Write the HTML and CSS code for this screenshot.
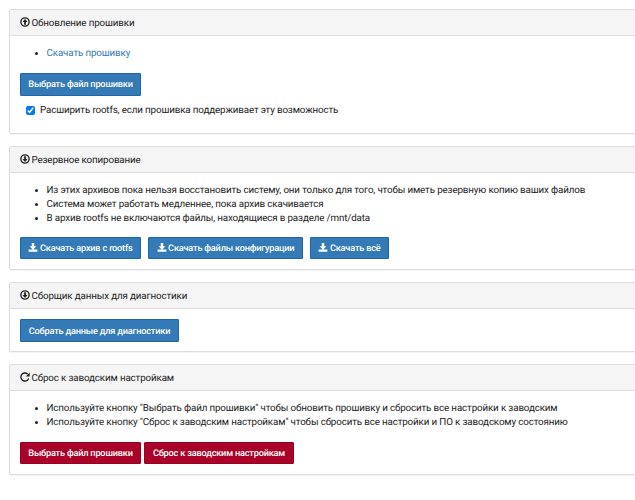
FILE: index.html
```html
<!DOCTYPE html>
<html lang="ru">
<head>
    <meta charset="UTF-8">
    <title>Система</title>
    <link rel="stylesheet" href="styles.css">
</head>
<body>
    <svg class="sprite">
        <symbol id="icon-up" viewBox="0 0 16 16">
            <circle cx="8" cy="8" r="6.6" fill="none" stroke="currentColor" stroke-width="2.2"/>
            <path d="M8 3.2 12 8H9.4v4.3H6.6V8H4z" fill="currentColor"/>
        </symbol>
        <symbol id="icon-down" viewBox="0 0 16 16">
            <circle cx="8" cy="8" r="6.6" fill="none" stroke="currentColor" stroke-width="2.2"/>
            <path d="M8 12.8 4 8h2.6V3.7h2.8V8H12z" fill="currentColor"/>
        </symbol>
        <symbol id="icon-repeat" viewBox="0 0 16 16">
            <path d="M13.8 10.3A6.4 6.4 0 1 1 12.2 3.4" fill="none" stroke="currentColor" stroke-width="2.2"/>
            <path d="M15.5 0.8V7H9.3z" fill="currentColor"/>
        </symbol>
        <symbol id="icon-save" viewBox="0 0 16 16">
            <path d="M6 0h4v5h3.4L8 10.6 2.6 5H6zM1 10.5h14V14H1z" fill="currentColor"/>
        </symbol>
    </svg>
    <main class="page">
        <section class="panel panel-update">
            <h3 class="panel-heading"><svg class="icon"><use href="#icon-up"/></svg>Обновление прошивки</h3>
            <div class="panel-body">
                <ul class="notes">
                    <li><a href="#">Скачать прошивку</a></li>
                </ul>
                <div class="buttons">
                    <button class="btn btn-primary btn-tall">Выбрать файл прошивки</button>
                </div>
                <label class="checkbox"><input type="checkbox" checked><span>Расширить rootfs, если прошивка поддерживает эту возможность</span></label>
            </div>
        </section>
        <section class="panel panel-backup">
            <h3 class="panel-heading"><svg class="icon"><use href="#icon-down"/></svg>Резервное копирование</h3>
            <div class="panel-body">
                <ul class="notes">
                    <li>Из этих архивов пока нельзя восстановить систему, они только для того, чтобы иметь резервную копию ваших файлов</li>
                    <li>Система может работать медленнее, пока архив скачивается</li>
                    <li>В архив rootfs не включаются файлы, находящиеся в разделе /mnt/data</li>
                </ul>
                <div class="buttons buttons-wide">
                    <button class="btn btn-primary"><svg class="icon"><use href="#icon-save"/></svg>Скачать архив с rootfs</button>
                    <button class="btn btn-primary btn-config"><svg class="icon"><use href="#icon-save"/></svg>Скачать файлы конфигурации</button>
                    <button class="btn btn-primary btn-all"><svg class="icon"><use href="#icon-save"/></svg>Скачать всё</button>
                </div>
            </div>
        </section>
        <section class="panel panel-diag">
            <h3 class="panel-heading"><svg class="icon"><use href="#icon-down"/></svg>Сборщик данных для диагностики</h3>
            <div class="panel-body">
                <div class="buttons">
                    <button class="btn btn-primary btn-collect">Собрать данные для диагностики</button>
                </div>
            </div>
        </section>
        <section class="panel panel-reset">
            <h3 class="panel-heading"><svg class="icon"><use href="#icon-repeat"/></svg>Сброс к заводским настройкам</h3>
            <div class="panel-body">
                <ul class="notes">
                    <li>Используйте кнопку "Выбрать файл прошивки" чтобы обновить прошивку и сбросить все настройки к заводским</li>
                    <li>Используйте кнопку "Сброс к заводским настройкам" чтобы сбросить все настройки и ПО к заводскому состоянию</li>
                </ul>
                <div class="buttons">
                    <button class="btn btn-danger">Выбрать файл прошивки</button>
                    <button class="btn btn-danger btn-factory">Сброс к заводским настройкам</button>
                </div>
            </div>
        </section>
    </main>
</body>
</html>
```
FILE: styles.css
```css
* { box-sizing: border-box; }
body { margin: 0; background: #fff; color: #222; font: 9.8px/13.75px Roboto, sans-serif; letter-spacing: -0.14px; text-rendering: geometricPrecision; overflow: hidden; }
.sprite { display: none; }
.page { width: 650px; padding: 9px 0 0 9px; }
.panel { margin-bottom: 12px; border: 1px solid #ddd; border-radius: 2px; background: #fff; box-shadow: 0 1px 1px rgba(0,0,0,0.05); }
.panel-update { height: 125px; }
.panel-backup { height: 124px; }
.panel-diag { height: 70px; }
.panel-reset { height: 111px; }
.panel-heading { display: flex; align-items: center; height: 26px; margin: 0; padding: 2px 10px 0; border-bottom: 1px solid #ddd; background: #f5f5f5; font-size: inherit; font-weight: normal; }
.icon { width: 10px; height: 10px; margin-right: 1.5px; flex: none; }
.panel-heading .icon { margin-top: -3px; }
.panel-body { padding: 11px 10px 10px; }
.notes { margin: 0 0 12px; padding-left: 26.5px; }
.notes a { color: #337ab7; text-decoration: none; }
.buttons { display: flex; gap: 3px; }
.panel-diag .buttons { margin-top: -1px; }
.buttons-wide { gap: 7px; }
.btn { display: flex; align-items: center; justify-content: center; width: 121px; height: 22px; padding: 1px 0 0; border: 1px solid; border-radius: 1px; color: #fff; font: 500 9.2px/13px Roboto, sans-serif; letter-spacing: -0.2px; text-rendering: inherit; white-space: nowrap; }
.btn .icon { margin-top: -1px; }
.btn-tall { height: 23px; }
.btn-primary { border-color: #1f65a8; background: #337ab7; }
.btn-danger { border-color: #980222; background: #a90329; }
.btn-config { width: 155px; }
.btn-all { width: 79px; }
.btn-collect { width: 159px; height: 23px; }
.btn-factory { width: 150px; }
.checkbox { display: flex; align-items: center; margin: 7px 0 0 6px; }
.checkbox input { width: 9px; height: 9px; margin: 0 5px 0 0; }
.checkbox span { padding-top: 1px; }
```
